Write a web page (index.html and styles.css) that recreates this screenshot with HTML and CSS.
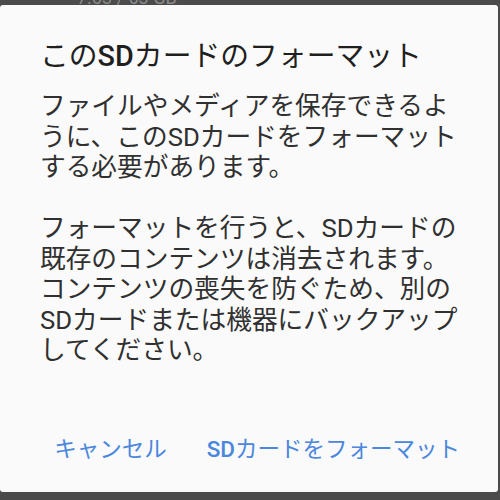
FILE: index.html
```html
<!DOCTYPE html>
<html lang="ja">
<head>
<meta charset="utf-8">
<link rel="stylesheet" href="styles.css">
</head>
<body>
<div class="screen">
  <div class="backdrop-strip"><span class="backdrop-text">7.63 / 63 GB</span></div>
  <div class="dialog">
    <h1 class="title">この<span class="latin">SD</span>カードのフォーマット</h1>
    <div class="body">
      <p class="para">ファイルやメディアを保存できるよ<br>うに、このSDカードをフォーマット<br>する必要があります。</p>
      <p class="para">フォーマットを行うと、SDカードの<br>既存のコンテンツは消去されます。<br>コンテンツの喪失を防ぐため、別の<br>SDカードまたは機器にバックアップ<br>してください。</p>
    </div>
    <div class="actions">
      <span class="btn">キャンセル</span>
      <span class="btn"><span class="latin">SD</span>カードをフォーマット</span>
    </div>
  </div>
</div>
</body>
</html>
```

FILE: styles.css
```css
html, body {
  margin: 0;
  padding: 0;
}
body {
  width: 500px;
  height: 500px;
  background: #4b4b4b;
  overflow: hidden;
  font-family: Roboto, "Noto Sans CJK JP", sans-serif;
}
.screen {
  display: flex;
  flex-direction: column;
  height: 500px;
}
.backdrop-strip {
  height: 5px;
  overflow: hidden;
  display: flex;
  align-items: flex-end;
  padding-left: 77px;
}
.backdrop-text {
  display: block;
  font-size: 18px;
  line-height: 14px;
  color: #8a8a8a;
  white-space: nowrap;
}
.dialog {
  width: 498px;
  height: 487px;
  box-sizing: border-box;
  background: #fafafa;
  border-radius: 3px;
  padding: 33px 0 0 40px;
  display: flex;
  flex-direction: column;
}
.title {
  margin: 0 0 17px 0;
  font-size: 28.8px;
  line-height: 36px;
  font-weight: 400;
  color: #1f1f1f;
  white-space: nowrap;
}
.latin {
  font-weight: 500;
}
.body {
  color: #303030;
  font-size: 25.7px;
  line-height: 30.5px;
  white-space: nowrap;
}
.para {
  margin: 0 0 30.5px 0;
}
.para:last-child {
  margin-bottom: 0;
}
.actions {
  margin-top: 61px;
  display: flex;
  justify-content: flex-end;
  gap: 40px;
  padding-right: 38px;
}
.btn {
  font-size: 22.5px;
  line-height: 24px;
  padding: 10px 0;
  color: #4a87dd;
  white-space: nowrap;
}
```
